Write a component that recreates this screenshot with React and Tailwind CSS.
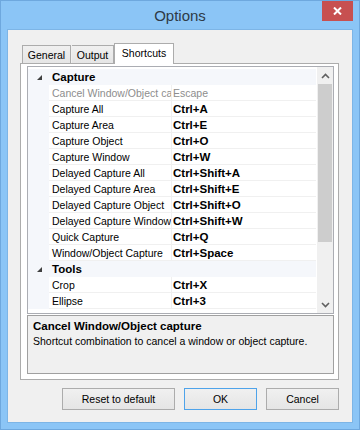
import React from "react";

const rows = [
  { type: "header", name: "Capture" },
  { name: "Cancel Window/Object capture", key: "Escape", disabled: true },
  { name: "Capture All", key: "Ctrl+A" },
  { name: "Capture Area", key: "Ctrl+E" },
  { name: "Capture Object", key: "Ctrl+O" },
  { name: "Capture Window", key: "Ctrl+W" },
  { name: "Delayed Capture All", key: "Ctrl+Shift+A" },
  { name: "Delayed Capture Area", key: "Ctrl+Shift+E" },
  { name: "Delayed Capture Object", key: "Ctrl+Shift+O" },
  { name: "Delayed Capture Window", key: "Ctrl+Shift+W" },
  { name: "Quick Capture", key: "Ctrl+Q" },
  { name: "Window/Object Capture", key: "Ctrl+Space" },
  { type: "header", name: "Tools" },
  { name: "Crop", key: "Ctrl+X" },
  { name: "Ellipse", key: "Ctrl+3" },
];

function Row({ row }) {
  if (row.type === "header") {
    return (
      <div className="h-[16px] flex items-center bg-[#f5f7fb] shrink-0">
        <div className="w-[21px] flex items-center justify-end pr-[7px] pt-[1px]">
          <svg width="5" height="5" viewBox="0 0 5 5">
            <polygon points="5,0 5,5 0,5" fill="#404040" />
          </svg>
        </div>
        <div className="pl-[3px] text-[11.5px] font-bold text-black leading-[17px]">{row.name}</div>
      </div>
    );
  }
  const muted = row.disabled ? "text-[#8d8d8d]" : "text-black";
  return (
    <div className="h-[16px] flex shrink-0">
      <div className="w-[21px] bg-[#f5f7fb]" />
      <div className={`w-[123px] h-[16px] bg-white border-b border-r border-[#f0f0f0] pl-[3px] overflow-hidden whitespace-nowrap text-[10.5px] leading-[17px] ${muted}`}>
        {row.name}
      </div>
      <div
        className={`flex-1 h-[16px] bg-white border-b border-[#f0f0f0] pl-[1px] whitespace-nowrap overflow-hidden leading-[17px] ${
          row.disabled ? "text-[10.5px] text-[#8d8d8d]" : "text-[11.5px] font-bold text-black"
        }`}
      >
        {row.key}
      </div>
    </div>
  );
}

function Chevron({ up }) {
  return (
    <svg width="9" height="6" viewBox="0 0 9 6">
      <polyline
        points={up ? "1,5 4.5,1.5 8,5" : "1,1 4.5,4.5 8,1"}
        fill="none"
        stroke="#606060"
        strokeWidth="1.6"
      />
    </svg>
  );
}

export default function App() {
  return (
    <div className="w-[360px] h-[430px] bg-[#8bc5f6] border border-[#6ea8de] flex flex-col font-['Liberation_Sans',Arial,sans-serif]">
      {/* title bar */}
      <div className="h-[28px] grid grid-cols-[1fr_auto_1fr] items-start shrink-0">
        <div />
        <div className="text-[15px] text-[#2e3a46] leading-[18px] pt-[6px]">Options</div>
        <div className="justify-self-end mr-[6px]">
          <div className="w-[31px] h-[20px] bg-[#c75050] flex items-center justify-center">
            <svg width="9" height="8" viewBox="0 0 9 8">
              <path d="M1 0.5 L8 7.5 M8 0.5 L1 7.5" stroke="white" strokeWidth="2" />
            </svg>
          </div>
        </div>
      </div>

      {/* client area */}
      <div className="mx-[6px] mb-[6px] flex-1 border border-[#7db5e6] bg-[#f0f0f0] pl-[12px] pt-[13px] flex flex-col">
        {/* tabs */}
        <div className="flex items-end h-[20px] pl-[2px] text-[10.5px] leading-[14px] text-black">
          <div className="w-[49px] h-[18px] border border-b-0 border-[#acacac] bg-gradient-to-b from-[#f0f0f0] to-[#e5e5e5] flex items-center justify-center">General</div>
          <div className="ml-[1px] w-[42px] h-[18px] border border-b-0 border-l-0 border-[#acacac] bg-gradient-to-b from-[#f0f0f0] to-[#e5e5e5] flex items-center justify-center">Output</div>
          <div className="relative z-10 -mb-px w-[60px] h-[21px] border border-b-0 border-[#acacac] bg-white flex items-center justify-center pb-[2px]">Shortcuts</div>
        </div>

        {/* tab panel */}
        <div className="w-[319px] h-[317px] border border-[#acacac] bg-white pl-[6px] pr-[4px] pt-[2px] flex flex-col">
          {/* property list */}
          <div className="h-[248px] border border-[#abadb3] flex overflow-hidden shrink-0">
            <div className="flex-1 flex flex-col pt-[2px] overflow-hidden">
              {rows.map((r, i) => (
                <Row key={i} row={r} />
              ))}
            </div>
            <div className="w-[17px] bg-[#f0f0f0] border-l border-white flex flex-col">
              <div className="h-[17px] flex items-center justify-center">
                <Chevron up />
              </div>
              <div className="mx-[1px] h-[158px] bg-[#cdcdcd]" />
              <div className="flex-1" />
              <div className="h-[17px] flex items-center justify-center">
                <Chevron />
              </div>
            </div>
          </div>

          {/* description */}
          <div className="mt-[1px] h-[59px] border border-[#a0a0a0] bg-[#f0f0f0] px-[5px] pt-[3px] shrink-0">
            <div className="text-[11.5px] font-bold text-black leading-[14px]">Cancel Window/Object capture</div>
            <div className="text-[10.5px] text-black leading-[14px] mt-[1px]">Shortcut combination to cancel a window or object capture.</div>
          </div>
        </div>

        {/* buttons */}
        <div className="w-[319px] mt-[8px] flex justify-end gap-[9px] text-[10.5px] leading-[14px] text-black">
          <div className="w-[113px] h-[22px] border border-[#acacac] bg-gradient-to-b from-[#f0f0f0] to-[#e5e5e5] flex items-center justify-center">Reset to default</div>
          <div className="w-[73px] h-[22px] border border-[#4ea3ea] bg-gradient-to-b from-[#f0f0f0] to-[#e5e5e5] flex items-center justify-center">OK</div>
          <div className="w-[73px] h-[22px] border border-[#acacac] bg-gradient-to-b from-[#f0f0f0] to-[#e5e5e5] flex items-center justify-center">Cancel</div>
        </div>
      </div>
    </div>
  );
}
